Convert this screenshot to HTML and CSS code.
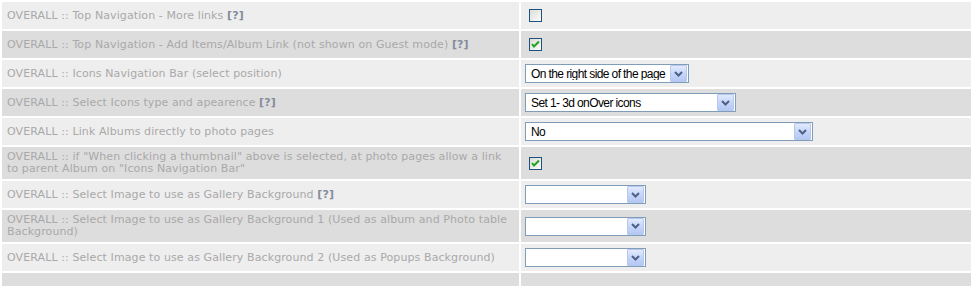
FILE: index.html
```html
<!DOCTYPE html>
<html lang="en">

<head>
    <meta charset="UTF-8">
    <title>Gallery Settings - Overall</title>
    <link rel="stylesheet" href="styles.css">
</head>

<body>
    <table class="settings">
        <tr class="row-light">
            <td class="label">OVERALL :: Top Navigation - More links <b class="help">[?]</b></td>
            <td class="field"><span class="check"></span></td>
        </tr>
        <tr class="row-dark">
            <td class="label">OVERALL :: Top Navigation - Add Items/Album Link (not shown on Guest mode) <b class="help">[?]</b></td>
            <td class="field">
                <span class="check checked">
                    <svg width="11" height="11" viewBox="0 0 11 11"><path d="M2 5 L4 7.5 L9 2.5" fill="none" stroke="#21a121" stroke-width="2"/></svg>
                </span>
            </td>
        </tr>
        <tr class="row-light">
            <td class="label">OVERALL :: Icons Navigation Bar (select position)</td>
            <td class="field">
                <div class="combo combo-164">
                    <span class="combo-text">On the right side of the page</span>
                    <span class="combo-btn"><svg width="9" height="6" viewBox="0 0 9 6"><path d="M1 1 L4.5 4.5 L8 1" fill="none" stroke="#4d6185" stroke-width="2"/></svg></span>
                </div>
            </td>
        </tr>
        <tr class="row-dark">
            <td class="label">OVERALL :: Select Icons type and apearence <b class="help">[?]</b></td>
            <td class="field">
                <div class="combo combo-211">
                    <span class="combo-text">Set 1- 3d onOver icons</span>
                    <span class="combo-btn"><svg width="9" height="6" viewBox="0 0 9 6"><path d="M1 1 L4.5 4.5 L8 1" fill="none" stroke="#4d6185" stroke-width="2"/></svg></span>
                </div>
            </td>
        </tr>
        <tr class="row-light">
            <td class="label">OVERALL :: Link Albums directly to photo pages</td>
            <td class="field">
                <div class="combo combo-288">
                    <span class="combo-text">No</span>
                    <span class="combo-btn"><svg width="9" height="6" viewBox="0 0 9 6"><path d="M1 1 L4.5 4.5 L8 1" fill="none" stroke="#4d6185" stroke-width="2"/></svg></span>
                </div>
            </td>
        </tr>
        <tr class="row-dark">
            <td class="label">OVERALL :: if "When clicking a thumbnail" above is selected, at photo pages allow a link to parent Album on "Icons Navigation Bar"</td>
            <td class="field">
                <span class="check checked">
                    <svg width="11" height="11" viewBox="0 0 11 11"><path d="M2 5 L4 7.5 L9 2.5" fill="none" stroke="#21a121" stroke-width="2"/></svg>
                </span>
            </td>
        </tr>
        <tr class="row-light">
            <td class="label">OVERALL :: Select Image to use as Gallery Background <b class="help">[?]</b></td>
            <td class="field">
                <div class="combo combo-121">
                    <span class="combo-text"></span>
                    <span class="combo-btn"><svg width="9" height="6" viewBox="0 0 9 6"><path d="M1 1 L4.5 4.5 L8 1" fill="none" stroke="#4d6185" stroke-width="2"/></svg></span>
                </div>
            </td>
        </tr>
        <tr class="row-dark">
            <td class="label">OVERALL :: Select Image to use as Gallery Background 1 (Used as album and Photo table Background)</td>
            <td class="field">
                <div class="combo combo-121">
                    <span class="combo-text"></span>
                    <span class="combo-btn"><svg width="9" height="6" viewBox="0 0 9 6"><path d="M1 1 L4.5 4.5 L8 1" fill="none" stroke="#4d6185" stroke-width="2"/></svg></span>
                </div>
            </td>
        </tr>
        <tr class="row-light">
            <td class="label">OVERALL :: Select Image to use as Gallery Background 2 (Used as Popups Background)</td>
            <td class="field">
                <div class="combo combo-121">
                    <span class="combo-text"></span>
                    <span class="combo-btn"><svg width="9" height="6" viewBox="0 0 9 6"><path d="M1 1 L4.5 4.5 L8 1" fill="none" stroke="#4d6185" stroke-width="2"/></svg></span>
                </div>
            </td>
        </tr>
        <tr class="row-dark row-empty">
            <td class="label">&nbsp;</td>
            <td class="field">&nbsp;</td>
        </tr>
    </table>
</body>

</html>
```

FILE: styles.css
```css
body {
    margin: 0;
    background: #fff;
    font-family: 'DejaVu Sans', Verdana, sans-serif;
}

.settings {
    width: 973px;
    border-spacing: 2px;
    table-layout: fixed;
}

.settings td {
    height: 19px;
    padding: 4px 5px;
    vertical-align: middle;
    font-size: 11px;
    line-height: 12px;
    color: #a9a9a9;
}

.settings td.label {
    width: 504px;
    padding-right: 8px;
    letter-spacing: 0.1px;
}

.settings td.field {
    padding-left: 4px;
}

.row-light td {
    background: #eeeeee;
}

.row-dark td {
    background: #dddddd;
}

.help {
    color: #848d9c;
}

/* xp style checkbox */
.check {
    display: flex;
    align-items: center;
    justify-content: center;
    width: 11px;
    height: 11px;
    margin: 3px 0 3px 4px;
    border: 1px solid #1c5180;
    background: linear-gradient(135deg, #dcdcd7 0%, #fbfbf9 100%);
}

/* xp style dropdown */
.combo {
    display: flex;
    align-items: center;
    height: 17px;
    border: 1px solid #7f9db9;
    background: #fff;
    font-family: 'Liberation Sans', Arial, sans-serif;
    font-size: 12px;
    letter-spacing: -0.6px;
    color: #000;
}

.combo-164 {
    width: 162px;
}

.combo-211 {
    width: 209px;
}

.combo-288 {
    width: 286px;
}

.combo-121 {
    width: 119px;
}

.combo-text {
    flex: 1;
    padding-left: 5px;
    white-space: nowrap;
    overflow: hidden;
}

.combo-btn {
    display: flex;
    align-items: center;
    justify-content: center;
    width: 15px;
    height: 15px;
    margin-right: 1px;
    border: 1px solid #b8c8ea;
    border-radius: 1px;
    background: linear-gradient(180deg, #e1eafd 0%, #c6d6fa 50%, #b4c8f4 100%);
}
```
